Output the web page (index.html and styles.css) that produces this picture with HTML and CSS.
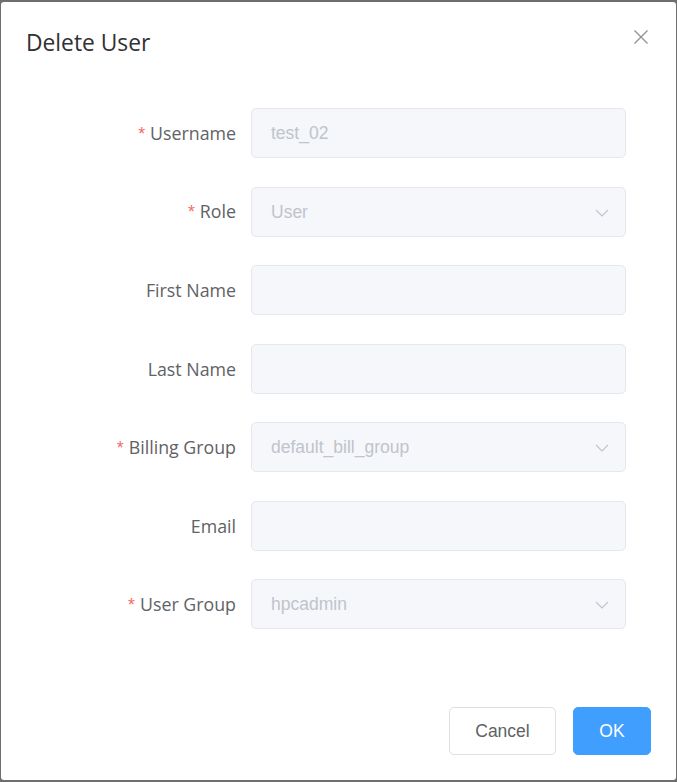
FILE: index.html
```html
<!DOCTYPE html>
<html>
<head>
<meta charset="utf-8">
<link rel="stylesheet" href="styles.css">
</head>
<body>
<div class="dialog">
  <div class="header">
    <span class="title">Delete User</span>
    <button class="close" aria-label="Close">
      <svg width="20" height="20" viewBox="0 0 20 20"><path d="M3.5 3.5 L16.5 16.5 M16.5 3.5 L3.5 16.5" stroke="#909399" stroke-width="1.4" fill="none"/></svg>
    </button>
  </div>
  <div class="body">
    <div class="row">
      <label class="label"><span class="req">*</span>Username</label>
      <div class="input disabled"><span class="val">test_02</span></div>
    </div>
    <div class="row">
      <label class="label"><span class="req">*</span>Role</label>
      <div class="input disabled"><span class="val">User</span><svg class="arrow" width="14" height="8" viewBox="0 0 14 8"><path d="M1 1 L7 7 L13 1" stroke="#c0c4cc" stroke-width="1.2" fill="none"/></svg></div>
    </div>
    <div class="row">
      <label class="label">First Name</label>
      <div class="input disabled"></div>
    </div>
    <div class="row">
      <label class="label">Last Name</label>
      <div class="input disabled"></div>
    </div>
    <div class="row">
      <label class="label"><span class="req">*</span>Billing Group</label>
      <div class="input disabled"><span class="val">default_bill_group</span><svg class="arrow" width="14" height="8" viewBox="0 0 14 8"><path d="M1 1 L7 7 L13 1" stroke="#c0c4cc" stroke-width="1.2" fill="none"/></svg></div>
    </div>
    <div class="row">
      <label class="label">Email</label>
      <div class="input disabled"></div>
    </div>
    <div class="row">
      <label class="label"><span class="req">*</span>User Group</label>
      <div class="input disabled"><span class="val">hpcadmin</span><svg class="arrow" width="14" height="8" viewBox="0 0 14 8"><path d="M1 1 L7 7 L13 1" stroke="#c0c4cc" stroke-width="1.2" fill="none"/></svg></div>
    </div>
  </div>
  <div class="footer">
    <button class="btn btn-default">Cancel</button>
    <button class="btn btn-primary">OK</button>
  </div>
</div>
</body>
</html>
```
FILE: styles.css
```css
html, body {
  margin: 0;
  padding: 0;
}
body {
  background: #6e6e6e;
  width: 677px;
  height: 782px;
  overflow: hidden;
  padding: 2px 1px 2px 1px;
  box-sizing: border-box;
}
.dialog {
  width: 675px;
  height: 778px;
  background: #fff;
  border-radius: 3px;
  display: flex;
  flex-direction: column;
  box-sizing: border-box;
}
.header {
  position: relative;
  padding: 26px 25px 11.5px 25px;
  height: 30px;
  box-sizing: content-box;
}
.title {
  font-family: "Open Sans", sans-serif;
  font-size: 22.8px;
  line-height: 30px;
  color: #303133;
}
.close {
  position: absolute;
  top: 25px;
  right: 25px;
  width: 20px;
  height: 20px;
  padding: 0;
  border: 0;
  background: none;
  display: block;
}
.close svg { display: block; }
.body {
  padding: 38.5px 25px 10px 25px;
  display: flex;
  flex-direction: column;
  gap: 28.5px;
  flex: 1;
}
.row {
  display: flex;
  align-items: center;
  height: 50px;
}
.label {
  width: 210px;
  padding-right: 15px;
  text-align: right;
  font-family: "Open Sans", sans-serif;
  font-size: 17.8px;
  color: #606266;
  line-height: 50px;
}
.req {
  color: #f56c6c;
  margin-right: 5px;
  font-family: "Liberation Sans", sans-serif;
}
.input {
  width: 375px;
  height: 50px;
  box-sizing: border-box;
  border: 1px solid #e4e7ed;
  border-radius: 5px;
  background: #f5f7fa;
  display: flex;
  align-items: center;
  padding: 0 15px 0 19px;
  font-family: "Liberation Sans", sans-serif;
  font-size: 17.5px;
  color: #c0c4cc;
}
.val { flex: 1; padding-top: 1px; }
.arrow { display: block; margin-right: 1px; margin-top: 2px; }
.footer {
  padding: 12.5px 25px 25px 25px;
  display: flex;
  justify-content: flex-end;
  gap: 17px;
}
.btn {
  height: 48px;
  border-radius: 5px;
  font-family: "Liberation Sans", sans-serif;
  font-size: 17.5px;
  box-sizing: border-box;
  padding: 0;
}
.btn-default {
  width: 107px;
  background: #fff;
  border: 1px solid #dcdfe6;
  color: #606266;
}
.btn-primary {
  width: 78px;
  background: #409eff;
  border: 1px solid #409eff;
  color: #fff;
}
```
